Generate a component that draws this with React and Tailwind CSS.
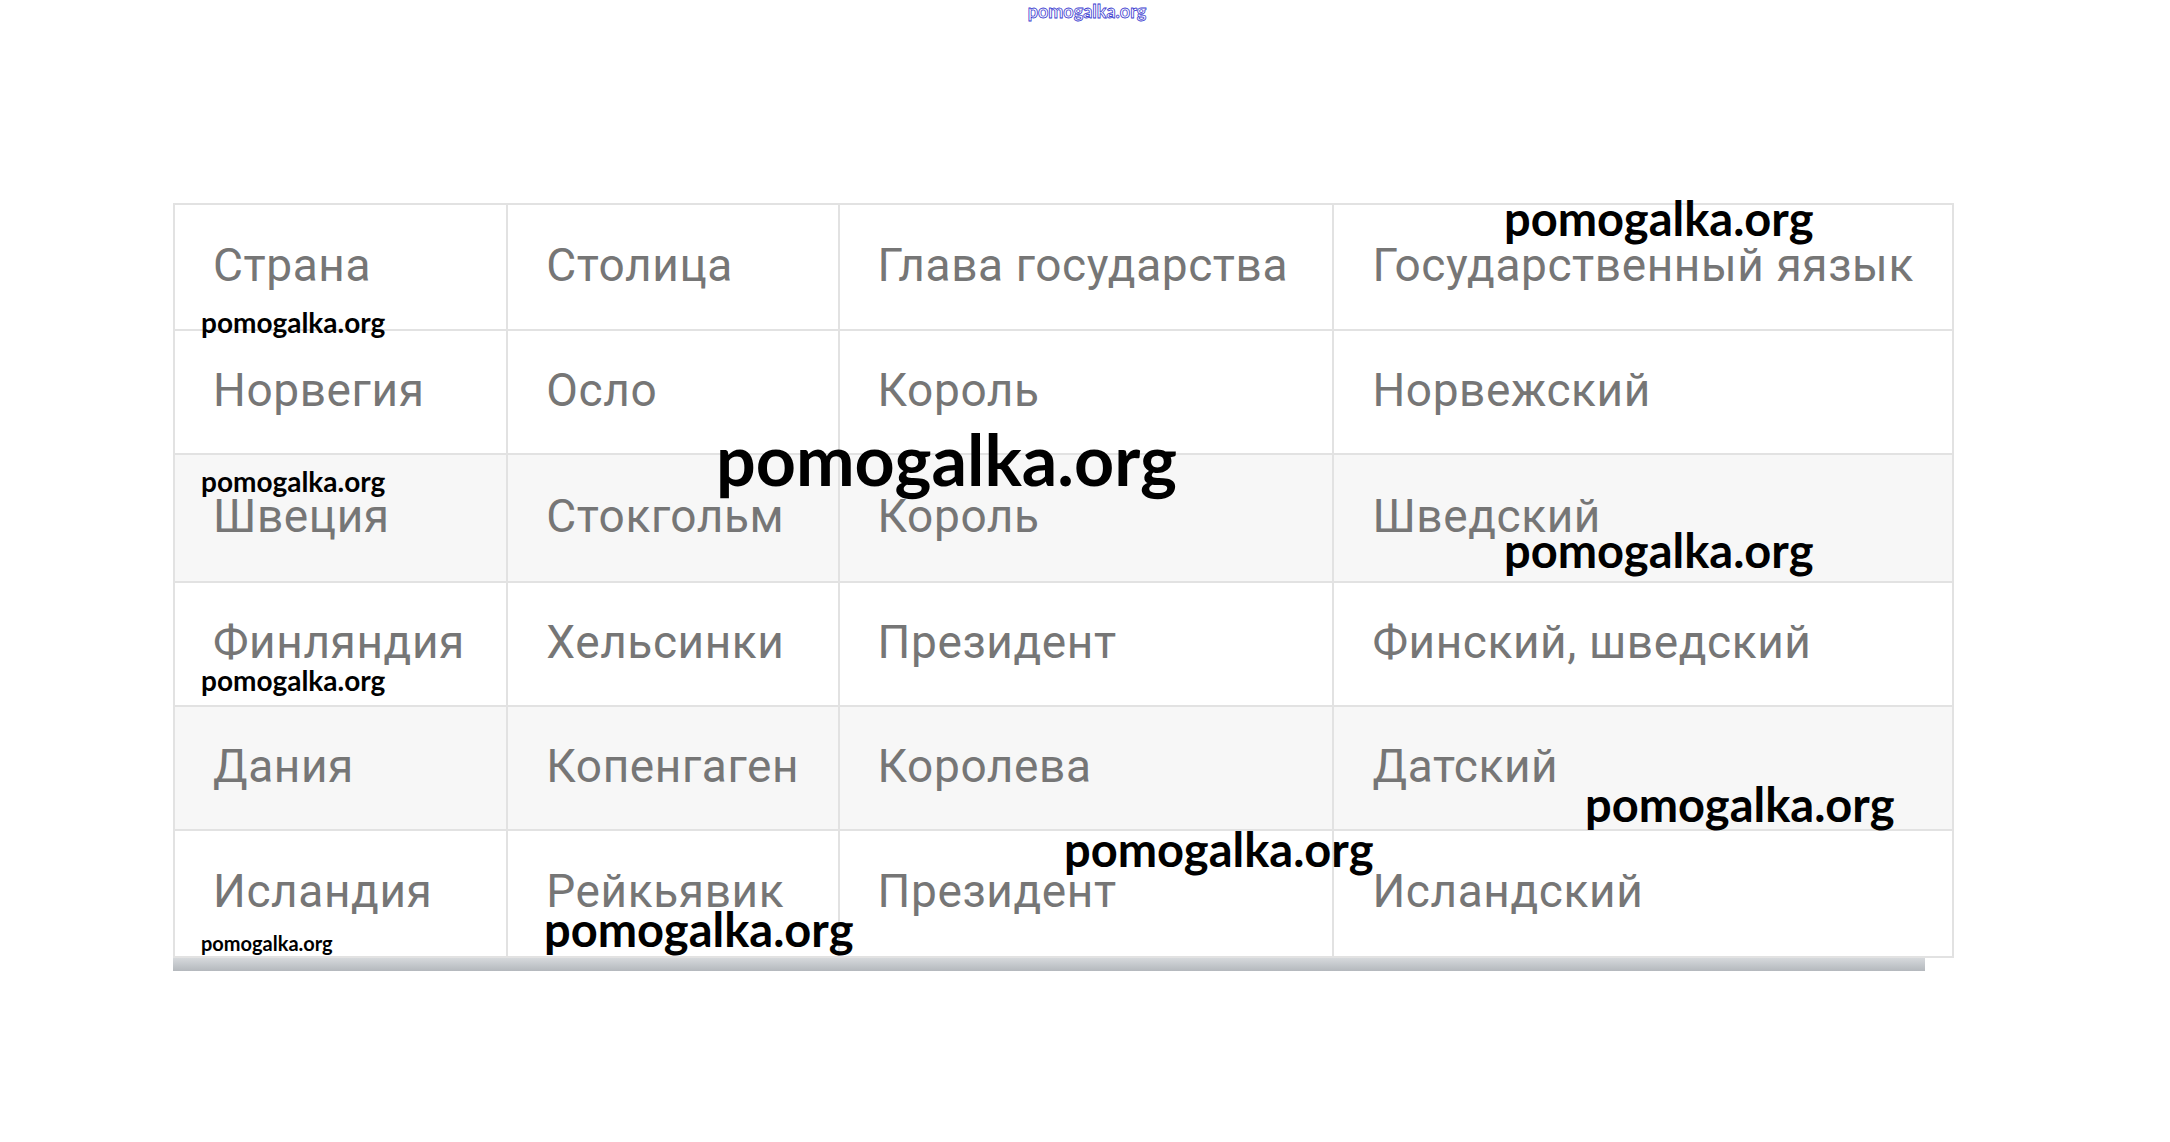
const rows = [
  { cells: ["Страна", "Столица", "Глава государства", "Государственный яязык"], h: "h-[124px]", bg: "bg-white" },
  { cells: ["Норвегия", "Осло", "Король", "Норвежский"], h: "h-[124px]", bg: "bg-white" },
  { cells: ["Швеция", "Стокгольм", "Король", "Шведский"], h: "h-[128px]", bg: "bg-[#f7f7f7]" },
  { cells: ["Финляндия", "Хельсинки", "Президент", "Финский, шведский"], h: "h-[124px]", bg: "bg-white" },
  { cells: ["Дания", "Копенгаген", "Королева", "Датский"], h: "h-[124px]", bg: "bg-[#f7f7f7]" },
  { cells: ["Исландия", "Рейкьявик", "Президент", "Исландский"], h: "h-[127px]", bg: "bg-white" },
];

const widths = ["w-[332px]", "w-[332px]", "w-[496px]", "w-[621px]"];

// watermark overlay on top of the table
function Mark({ className }) {
  return (
    <span className={"absolute font-['Lato',sans-serif] font-bold text-black leading-none whitespace-nowrap " + className}>
      pomogalka.org
    </span>
  );
}

export default function App() {
  return (
    <div className="relative w-[2170px] h-[1142px] bg-white overflow-hidden">
      <div className="flex justify-center pt-[2px]">
        <span className="ml-[4px] font-['Lato',sans-serif] font-bold text-[18px] leading-none text-transparent [-webkit-text-stroke:0.8px_#3b3bd0]">
          pomogalka.org
        </span>
      </div>

      <div className="pl-[173px] pt-[183px]">
        <div className="w-[1781px] border-2 border-[#e2e2e2] font-['Roboto',sans-serif] text-[#767676]">
          {rows.map((row, i) => (
            <div key={i} className={"flex " + row.h + " " + row.bg + (i > 0 ? " border-t-2 border-[#e2e2e2]" : "")}>
              {row.cells.map((c, j) => (
                <div
                  key={j}
                  className={"flex items-center pl-[38px] pb-[4px] text-[46px] tracking-[0.6px] " + widths[j] + (j > 0 ? " border-l-2 border-[#e2e2e2]" : "")}
                >
                  {c}
                </div>
              ))}
            </div>
          ))}
        </div>
        <div className="w-[1752px] h-[13px] bg-gradient-to-b from-[#d6d9dc] to-[#b4b8bd]" />
      </div>

      <Mark className="left-[1504px] top-[195px] text-[47px]" />
      <Mark className="left-[201px] top-[308px] text-[28px]" />
      <Mark className="left-[716px] top-[424px] text-[70px]" />
      <Mark className="left-[201px] top-[467px] text-[28px]" />
      <Mark className="left-[1504px] top-[527px] text-[47px]" />
      <Mark className="left-[201px] top-[666px] text-[28px]" />
      <Mark className="left-[1585px] top-[781px] text-[47px]" />
      <Mark className="left-[1064px] top-[826px] text-[47px]" />
      <Mark className="left-[544px] top-[906px] text-[47px]" />
      <Mark className="left-[201px] top-[933px] text-[20px]" />
    </div>
  );
}
